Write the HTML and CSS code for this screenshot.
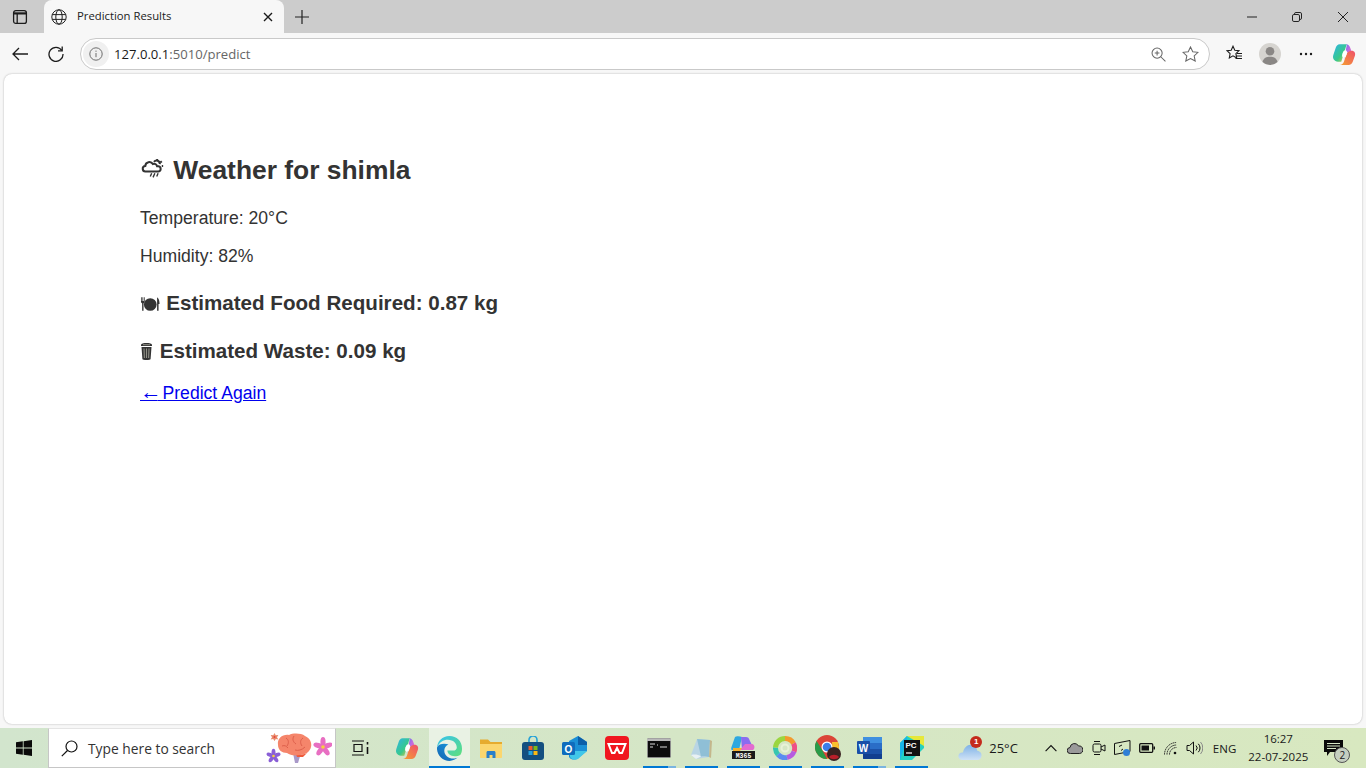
FILE: index.html
```html
<!DOCTYPE html>
<html lang="en">
<head>
    <meta charset="UTF-8">
    <title>Prediction Results</title>
    <link rel="stylesheet" href="styles.css">
</head>
<body>
<div class="window">
    <div class="tab-strip">
        <div class="strip-btn">
            <svg width="16" height="16" viewBox="0 0 16 16" fill="none" stroke="#1c1c1c" stroke-width="1.3"><rect x="1.6" y="1.6" width="12.8" height="12.8" rx="2.2"/><path d="M1.6 4.4h12.8" stroke-width="2.2"/><path d="M5.2 4.8v9.6"/></svg>
        </div>
        <div class="tab">
            <svg class="tab-globe" width="16" height="16" viewBox="0 0 16 16" fill="none" stroke="#222" stroke-width="1"><circle cx="8" cy="8" r="7.2"/><ellipse cx="8" cy="8" rx="3.2" ry="7.2"/><path d="M1.2 5.6h13.6M1.2 10.4h13.6"/></svg>
            <span class="tab-title">Prediction Results</span>
            <svg class="tab-close" width="10" height="10" viewBox="0 0 10 10" stroke="#1a1a1a" stroke-width="1.4"><path d="M1 1l8 8M9 1l-8 8"/></svg>
        </div>
        <div class="new-tab">
            <svg width="14" height="14" viewBox="0 0 14 14" stroke="#222" stroke-width="1.2"><path d="M7 0v14M0 7h14"/></svg>
        </div>
        <div class="window-controls">
            <div class="win-btn"><svg width="10" height="10" viewBox="0 0 10 10" stroke="#222" stroke-width="1"><path d="M0 5h10"/></svg></div>
            <div class="win-btn"><svg width="10" height="10" viewBox="0 0 10 10" fill="none" stroke="#222" stroke-width="1"><rect x=".5" y="2.5" width="7" height="7" rx="1.4"/><path d="M2.5 2.5v-.6a1.4 1.4 0 0 1 1.4-1.4h4.2a1.4 1.4 0 0 1 1.4 1.4v4.2a1.4 1.4 0 0 1-1.4 1.4h-.6"/></svg></div>
            <div class="win-btn"><svg width="10" height="10" viewBox="0 0 10 10" stroke="#222" stroke-width="1"><path d="M0 0l10 10M10 0l-10 10"/></svg></div>
        </div>
    </div>

    <div class="toolbar">
        <div class="nav-btn">
            <svg width="16" height="14" viewBox="0 0 16 14" fill="none" stroke="#1c1c1c" stroke-width="1.3"><path d="M16 7H1M7 1L1 7l6 6"/></svg>
        </div>
        <div class="nav-btn">
            <svg width="16" height="16" viewBox="0 0 16 16" fill="none" stroke="#1c1c1c" stroke-width="1.3"><path d="M13.8 4.4A7 7 0 1 0 15 8"/><path d="M14.2 .6v4.2h-4.2"/></svg>
        </div>
        <div class="address-bar">
            <div class="info-pill">
                <svg width="14" height="14" viewBox="0 0 14 14" fill="none" stroke="#6d6d6d" stroke-width="1"><circle cx="7" cy="7" r="6.2"/><path d="M7 6v4.2M7 3.6v1.2"/></svg>
            </div>
            <span class="url"><span class="url-host">127.0.0.1</span>:5010/predict</span>
            <div class="address-icons">
                <svg width="15" height="15" viewBox="0 0 16 16" fill="none" stroke="#666" stroke-width="1.1"><circle cx="6.5" cy="6.5" r="5.4"/><path d="M10.4 10.4l5 5M6.5 4v5M4 6.5h5"/></svg>
                <svg width="17" height="16" viewBox="0 0 18 17" fill="none" stroke="#666" stroke-width="1.1"><path d="M9 1l2.4 5 5.6.7-4.1 3.8 1.1 5.5L9 13.3 4 16l1.1-5.5L1 6.7 6.6 6z"/></svg>
            </div>
        </div>
        <div class="toolbar-icons">
            <div class="tool-btn"><svg width="17" height="17" viewBox="0 0 17 17" fill="none" stroke="#1c1c1c" stroke-width="1.1"><path d="M7 1.2l1.8 4 4.2.5-3.1 2.9.8 4.3L7 10.8l-3.7 2.1.8-4.3L1 5.7l4.2-.5z"/><path d="M11 8.5h5M10.5 11h5.500M9.500 13.500h6.500"/></svg></div>
            <div class="tool-btn"><div class="avatar"><svg width="22" height="22" viewBox="0 0 22 22"><circle cx="11" cy="11" r="11" fill="#d6d4d0"/><circle cx="11" cy="8.200" r="4.300" fill="#8a8785"/><path d="M3.500 19c1-4 4-5.200 7.500-5.200s6.500 1.200 7.500 5.200a11 11 0 0 1-15 0z" fill="#8a8785"/></svg></div></div>
            <div class="tool-btn"><svg width="14" height="4" viewBox="0 0 14 4" fill="#1c1c1c"><circle cx="2" cy="2" r="1.200"/><circle cx="7" cy="2" r="1.200"/><circle cx="12" cy="2" r="1.200"/></svg></div>
            <div class="tool-btn tool-copilot">
                <svg width="24" height="24" viewBox="0 0 22 22"><defs><linearGradient id="cpA" x1="0" y1="0" x2="1" y2="1"><stop offset="0" stop-color="#2fb4e8"/><stop offset=".6" stop-color="#38c98a"/><stop offset="1" stop-color="#f5c83a"/></linearGradient><linearGradient id="cpB" x1="0" y1="0" x2="1" y2="1"><stop offset="0" stop-color="#5a7bf0"/><stop offset=".5" stop-color="#c56be0"/><stop offset="1" stop-color="#f0609a"/></linearGradient><linearGradient id="cpC" x1="0" y1="1" x2="1" y2="0"><stop offset="0" stop-color="#f5a12e"/><stop offset="1" stop-color="#ef4f6c"/></linearGradient></defs><path d="M7 2h6.500l-3 9.500L8.500 18H5.500C2 18 .2 15 1.200 12L3.500 5C4.100 3.200 5.300 2 7 2z" fill="url(#cpA)"/><path d="M13 2c2 0 3 1.200 3.600 3L18 9h-1c-2.500 0-4 1-4.600 3L11 16 13.500 3z" fill="url(#cpB)"/><path d="M18 8c2.500 0 3.800 2 3 4.500l-2 5.500c-.6 1.700-1.900 3-3.800 3H7c2 0 3.300-1.300 3.900-3l1.700-5C13.300 10 15 8 18 8z" fill="url(#cpC)"/><ellipse cx="11.500" cy="11" rx="2" ry="3.500" fill="#fff" transform="rotate(18 11.500 11)"/></svg>
            </div>
        </div>
    </div>

    <main class="page">
        <h2 class="page-title">
            <svg class="emoji emoji-weather" width="25" height="21" viewBox="0 0 25 21" fill="none" stroke="#333" stroke-width="2.200"><g transform="translate(1 1) scale(.92)"><path d="M5 13.500H4a3 3 0 0 1-.4-6 4.400 4.400 0 0 1 8.200-2 3.400 3.400 0 0 1 4.600 2.500h1.600a2.800 2.800 0 0 1 0 5.500z"/><path d="M13 3a3.600 3.600 0 0 1 6.400 2.500M16.500 0v1.200M21.500 2.500l-1.200 1M23 7.500h-1.500"/><path d="M10.500 15.500l-1.500 3.500M14 15.500l-2 4.500M17.500 15.500l-1.500 3.500" stroke-width="1.500"/></g></svg>
            Weather for shimla
        </h2>
        <p>Temperature: 20°C</p>
        <p>Humidity: 82%</p>
        <h3 class="food-line">
            <svg class="emoji emoji-food" width="20.500" height="16" viewBox="0 0 21 16"><circle cx="10.500" cy="8.500" r="6.500" fill="#333"/><path d="M1 1v4.500c0 1 .6 1.600 1.200 2V15h1.400V7.500c.6-.4 1.200-1 1.200-2V1H4v4H3.300V1H2.500v4H1.800V1zM17.500 1c2 1.500 2.500 4 2.500 7h-1v7h-1.500z" fill="#333"/></svg>
            Estimated Food Required: 0.87 kg
        </h3>
        <h3>
            <svg class="emoji emoji-bin" width="14" height="17" viewBox="0 0 14 17"><path d="M1 1.500C1 .6 3.500 0 6.500 0S12 .6 12 1.500V3H1z" fill="#333"/><path d="M1.500 4h10L10.600 16c0 .6-2 1-4.100 1s-4.100-.4-4.100-1z" fill="#333"/><path d="M4 5.500l.4 9.500M6.500 5.500V15M9 5.500L8.600 15" stroke="#8f8f85" stroke-width="1.100"/><path d="M3 1.700h7" stroke="#8f8f85"/></svg>
            Estimated Waste: 0.09 kg
        </h3>
        <a class="back-link" href="#"><span class="back-arrow">←</span> Predict Again</a>
    </main>

    <footer class="taskbar">
        <div class="start-btn">
            <svg width="16" height="16" viewBox="0 0 16 16" fill="#0a0a0a"><path d="M0 2.300l6.800-1v6.300H0zM7.600 1.200L16 0v7.600H7.600zM0 8.400h6.800v6.300l-6.800-1zM7.600 8.400H16V16l-8.400-1.200z"/></svg>
        </div>
        <div class="search-box">
            <svg width="17" height="17" viewBox="0 0 17 17" fill="none" stroke="#111" stroke-width="1.200"><circle cx="10.500" cy="6.500" r="5.500"/><path d="M6.500 10.500L.8 16.200"/></svg>
            <span class="search-text">Type here to search</span>
            <svg class="search-art" width="66" height="36" viewBox="0 0 66 36">
                <path d="M27 23h8l-3 10h-3z" fill="#a999c9"/>
                <path d="M29 22c3 3 9 3 12 1l-4 4h-6z" fill="#ef5a3a"/>
                <path d="M12 15C11 8 17 4 23 5c4-2 12-2 16 1 5 2 7 7 6 11-1 5-6 8-12 8-5 1-9 0-12-2-5 0-9-3-9-8z" fill="#f5856b"/>
                <path d="M20 8c3 2 3 5 1 8M28 6c-2 3-1 6 2 8M37 8c-3 2-3 5-1 8M16 16c3-1 4 0 6 2M29 20c3 1 7 0 10-3" fill="none" stroke="#dd5f4b" stroke-width="1"/>
                <g transform="translate(1 0)">
                    <g fill="#e86fc2"><ellipse cx="56" cy="12" rx="2.600" ry="5"/><ellipse cx="56" cy="12" rx="2.600" ry="5" transform="rotate(72 56 17)"/><ellipse cx="56" cy="12" rx="2.600" ry="5" transform="rotate(144 56 17)"/><ellipse cx="56" cy="12" rx="2.600" ry="5" transform="rotate(216 56 17)"/><ellipse cx="56" cy="12" rx="2.600" ry="5" transform="rotate(288 56 17)"/></g><circle cx="56" cy="17" r="1.800" fill="#f5d33c"/>
                </g>
                <g transform="translate(1.500 0)">
                    <g fill="#8a5fd6"><ellipse cx="6" cy="22.500" rx="2" ry="3.800"/><ellipse cx="6" cy="22.500" rx="2" ry="3.800" transform="rotate(72 6 26)"/><ellipse cx="6" cy="22.500" rx="2" ry="3.800" transform="rotate(144 6 26)"/><ellipse cx="6" cy="22.500" rx="2" ry="3.800" transform="rotate(216 6 26)"/><ellipse cx="6" cy="22.500" rx="2" ry="3.800" transform="rotate(288 6 26)"/></g><circle cx="6" cy="26" r="1.300" fill="#f5d33c"/>
                    <path d="M7 3l1.200 2.300L10.800 5 9.500 7.200 10.800 9.500 8.300 9 7 11 5.700 9 3.200 9.500 4.500 7.200 3.200 5l2.600.3z" fill="#e98a6a"/><circle cx="7" cy="7" r="1" fill="#e0433f"/>
                </g>
            </svg>
        </div>
        <div class="task-icons">
            <div class="task-view">
                <svg width="18" height="16" viewBox="0 0 18 16" fill="none" stroke="#111" stroke-width="1.200"><path d="M0 1h12M0 15h12M2 4.500h8v7H2z"/><path d="M15.500 2v2.500M15.500 7v7" stroke-width="1.600"/></svg>
            </div>
            <div class="task-item">
                <svg width="24" height="24" viewBox="0 0 22 22"><path d="M7 2h6.500l-3 9.500L8.500 18H5.500C2 18 .2 15 1.200 12L3.500 5C4.100 3.200 5.300 2 7 2z" fill="url(#cpA)"/><path d="M13 2c2 0 3 1.200 3.600 3L18 9h-1c-2.500 0-4 1-4.600 3L11 16 13.500 3z" fill="url(#cpB)"/><path d="M18 8c2.500 0 3.800 2 3 4.500l-2 5.500c-.6 1.700-1.900 3-3.800 3H7c2 0 3.300-1.300 3.900-3l1.700-5C13.300 10 15 8 18 8z" fill="url(#cpC)"/><ellipse cx="11.500" cy="11" rx="2" ry="3.500" fill="#fff" transform="rotate(18 11.500 11)"/></svg>
            </div>
            <div class="task-item is-active">
                <svg width="25" height="25" viewBox="0 0 24 24"><defs><linearGradient id="edgeA" x1="0" y1="1" x2="1" y2="0"><stop offset="0" stop-color="#1463b0"/><stop offset="1" stop-color="#1b9de2"/></linearGradient><linearGradient id="edgeB" x1="0" y1="0" x2="1" y2="1"><stop offset="0" stop-color="#35c1f1"/><stop offset="1" stop-color="#5fe07a"/></linearGradient></defs><path d="M12 0C5 0 .5 5 0 11c2-5 6-7.500 10.500-7.500 5 0 8.500 3.500 8.500 7.500 0 2-1.500 3-3.500 3H10c0 3 3 5.500 7 5.500 2 0 4-.5 5.500-1.500C24 15.500 24 13.500 24 12 24 5 19 0 12 0z" fill="url(#edgeB)"/><path d="M0 11c-.5 7 5 13 12 13 3 0 6-1.500 8-3.500-1.500 1-3 1.200-4 1.200-5.500 0-9-3.500-9-7.500 0-2.500 1.500-5 4-6C8 7 1.500 7 0 11z" fill="url(#edgeA)"/></svg>
            </div>
            <div class="task-item">
                <svg width="24" height="24" viewBox="0 0 24 24"><path d="M1 3.500h8l2.500 2.500H23v3H1z" fill="#e6ab2e"/><path d="M1 8h22v13c0 .6-.4 1-1 1H2c-.6 0-1-.4-1-1z" fill="#fbd66e"/><path d="M7.500 22v-5.500c0-1 .7-1.500 1.500-1.500h6c.8 0 1.500.5 1.500 1.500V22h-3v-3h-3v3z" fill="#2a7fc9"/></svg>
            </div>
            <div class="task-item">
                <svg width="24" height="24" viewBox="0 0 24 24"><path d="M8 7V4a4 4 0 0 1 8 0v3" fill="none" stroke="#25a2d8" stroke-width="1.600"/><rect x="1" y="6" width="22" height="18" rx="3" fill="#144f80"/><path d="M7.500 10h4v4h-4z" fill="#ef5b2b"/><path d="M12.500 10h4v4h-4z" fill="#7db71a"/><path d="M7.500 15h4v4h-4z" fill="#23a3e0"/><path d="M12.500 15h4v4h-4z" fill="#fbb813"/></svg>
            </div>
            <div class="task-item">
                <svg width="25" height="24" viewBox="0 0 25 24"><path d="M7 5l9-5 9 6v9L15 23c-3 1-6 1-8-2z" fill="#1b8fd6"/><path d="M16 0l9 6v3h-9z" fill="#0c5ea8"/><path d="M8 15h17l-9 8c-3 1-6 1-8-2z" fill="#41c7e9"/><rect x="0" y="6" width="13" height="13" rx="1.500" fill="#0f6cbd"/><text class="outlook-o" x="6.500" y="16.500">O</text></svg>
            </div>
            <div class="task-item">
                <svg width="24" height="24" viewBox="0 0 24 24"><rect width="24" height="24" rx="4" fill="#f0161f"/><path d="M3.500 8h17l-3.500 9h-2.500L12 12l-2.500 5H7z" fill="none" stroke="#fff" stroke-width="2"/></svg>
            </div>
            <div class="task-item is-open is-multi">
                <svg width="24" height="20" viewBox="0 0 24 20"><rect x=".5" y=".5" width="23" height="19" rx="1" fill="#0c0c0c" stroke="#8b8b8b"/><path d="M0 .5h24V3H0z" fill="#b9b9b9"/><path d="M3 6h5M3 9h3M10 7h1M13 9h7" stroke="#d9d9d9" stroke-width="1.200"/></svg>
            </div>
            <div class="task-item is-open">
                <svg width="24" height="24" viewBox="0 0 24 24"><path d="M2 19L8 3l13 1-1 17-13 2z" fill="#b9d5e4"/><path d="M8 3l13 1-1 17c-2-.5-5-1-8-.5z" fill="#8fbfd6"/><path d="M2 19c4-1 7-.5 10 1.500L7 23z" fill="#e9f1f4"/><path d="M20 21l1-17 2 1-1 17z" fill="#c4b78c"/></svg>
            </div>
            <div class="task-item is-open">
                <svg width="26" height="24" viewBox="0 0 26 24"><path d="M5 1c1-1 5-1 7 0L9 14H2C1 14 1 12 1.500 11z" fill="#2fa8e0"/><path d="M11 1h5c2 0 3 1 3.500 3L22 9h-7l-3 5z" fill="#8a6cf0"/><path d="M15 8h6c3 0 4 2 3 5l-1 1H10z" fill="#e26bd0"/><path d="M3 12h9l-2 3H3z" fill="#f6b12e"/><rect x="2" y="15" width="23" height="8" fill="#1a1a1a"/><text class="m365" x="13.500" y="21.800">M365</text></svg>
            </div>
            <div class="task-item is-open">
                <svg width="24" height="24" viewBox="0 0 24 24" fill="none" stroke-width="5"><path d="M12 2.500a9.500 9.500 0 0 1 8.500 5" stroke="#f39a2e"/><path d="M20.500 7.500a9.500 9.500 0 0 1 .5 8" stroke="#ee4f86"/><path d="M21 15.500a9.500 9.500 0 0 1-7 6" stroke="#b65ce0"/><path d="M14 21.500a9.500 9.500 0 0 1-9-3" stroke="#5a8cf0"/><path d="M5 18.500a9.500 9.500 0 0 1-2.500-7" stroke="#35c6b0"/><path d="M2.500 11.500A9.500 9.500 0 0 1 12 2.500" stroke="#9bd63f"/><circle cx="12" cy="12" r="3.500" stroke="#e8f2d8" stroke-width="2"/></svg>
            </div>
            <div class="task-item is-open">
                <svg width="26" height="26" viewBox="0 0 26 26"><circle cx="12" cy="12" r="12" fill="#db4437"/><path d="M12 24a12 12 0 0 1-10.400-18L7 14.500l5 9.500z" fill="#2a9b48"/><path d="M24 12a12 12 0 0 1-12 12l5.500-9L17 7h6z" fill="#fbc02d"/><circle cx="12" cy="12" r="5.500" fill="#fff"/><circle cx="12" cy="12" r="4.300" fill="#3b7de9"/><circle cx="19" cy="19" r="7" fill="#3a2320"/><path d="M14 22c2-3 8-3 10 0-2 3-8 3-10 0z" fill="#b8202a"/></svg>
            </div>
            <div class="task-item is-open is-multi">
                <svg width="25" height="24" viewBox="0 0 25 24"><rect x="6" y="1" width="19" height="22" rx="1" fill="#2a6dc7"/><path d="M6 1h19v6H6z" fill="#3f8fe0"/><path d="M6 13h19v5H6z" fill="#1c52a8"/><path d="M6 18h19v4c0 .6-.4 1-1 1H7c-.6 0-1-.4-1-1z" fill="#123f8f"/><rect y="5" width="13" height="13" rx="1" fill="#1a4fa8"/><text class="word-w" x="6.500" y="15.500">W</text></svg>
            </div>
            <div class="task-item is-open">
                <svg width="24" height="24" viewBox="0 0 24 24"><path d="M7 0h17v12L12 24H0V7z" fill="#25d0c0"/><path d="M7 0h17v10z" fill="#e6e83a"/><path d="M0 7l7-7v4L0 24z" fill="#19b6e8"/><rect x="4" y="4" width="16" height="16" fill="#111"/><text class="pc-mark" x="5.500" y="12">PC</text><path d="M6 17h6" stroke="#fff" stroke-width="1.200"/></svg>
            </div>
        </div>
        <div class="weather">
            <div class="weather-icon">
                <svg width="24" height="24" viewBox="0 0 24 24"><defs><linearGradient id="cloudA" x1="0" y1="0" x2="0" y2="1"><stop offset="0" stop-color="#7fb2e6"/><stop offset="1" stop-color="#cfe2f6"/></linearGradient></defs><path d="M5 24c-3 0-5-2-4.500-4.500C1 17 3 16 5 16.500c1-5 5-8.500 9-7.500 3 .7 5 3 5.500 6 2.500 0 4.500 2.500 4 5-.3 2.500-2 4-4 4z" fill="url(#cloudA)"/></svg>
                <span class="weather-badge">1</span>
            </div>
            <span class="weather-temp">25°C</span>
        </div>
        <div class="tray">
            <div class="tray-item"><svg width="12" height="8" viewBox="0 0 12 8" fill="none" stroke="#111" stroke-width="1.100"><path d="M.6 7.200L6 1.500l5.400 5.700"/></svg></div>
            <div class="tray-item"><svg width="16" height="11" viewBox="0 0 16 11"><path d="M3.500 10.500a3 3 0 0 1-.5-6A4.500 4.500 0 0 1 11.500 3a3.800 3.800 0 0 1 1.200 7.500z" fill="#9a9a9a" stroke="#222"/></svg></div>
            <div class="tray-item"><svg width="14" height="16" viewBox="0 0 14 16" fill="none" stroke="#111"><rect x="1" y="4" width="8" height="8" rx="1.500"/><path d="M9 7l4-2v6l-4-2M2 1.500h6M2 14.500h6"/></svg></div>
            <div class="tray-item"><svg width="17" height="17" viewBox="0 0 17 17" fill="none" stroke="#111"><path d="M.5 3.500L16 .5v11l-15.500 3z"/><path d="M5 6.500l3-1.500M9 9l-2 1.500"/><circle cx="12.500" cy="12.500" r="3.500" fill="#2f7fd6" stroke="none"/></svg></div>
            <div class="tray-item"><svg width="16" height="10" viewBox="0 0 16 10"><rect x=".7" y=".7" width="13" height="8.600" rx="1" fill="none" stroke="#111" stroke-width="1.300"/><rect x="2.500" y="2.500" width="7.500" height="5" fill="#111"/><rect x="14.500" y="3.500" width="1.500" height="3" fill="#111"/></svg></div>
            <div class="tray-item"><svg width="14" height="13" viewBox="0 0 14 13" fill="none" stroke="#222"><path d="M.5 12.500a12 12 0 0 1 12-12M3 12.500a9.500 9.500 0 0 1 9.500-9.500M5.500 12.500a7 7 0 0 1 7-7" stroke-dasharray="1.500 .6"/><circle cx="11" cy="11" r="1.300" fill="#111" stroke="none"/></svg></div>
            <div class="tray-item"><svg width="17" height="14" viewBox="0 0 17 14" fill="none" stroke="#111"><path d="M1 4.500h2.500L7.500 1v12l-4-3.500H1z"/><path d="M10 4.500a3.500 3.500 0 0 1 0 5M12.300 2.800a6 6 0 0 1 0 8.400"/><path d="M14.500 1a9 9 0 0 1 0 12" stroke="#888"/></svg></div>
            <span class="tray-lang">ENG</span>
            <div class="clock"><span>16:27</span><span>22-07-2025</span></div>
            <div class="notify">
                <svg width="19" height="16" viewBox="0 0 19 16"><path d="M0 0h19v12H6l-3 4v-4H0z" fill="#0a0a0a"/><path d="M3 3.500h13M3 6h13M3 8.500h9" stroke="#d5e6c5"/></svg>
                <span class="notify-count">2</span>
            </div>
        </div>
    </footer>
</div>
</body>
</html>
```

FILE: styles.css
```css
* {
    box-sizing: border-box;
}
body {
    margin: 0;
    font-family: "Liberation Sans", Arial, sans-serif;
    background-color: #f7f7f7;
    overflow: hidden;
}
svg {
    display: block;
    flex: none;
}
.window {
    display: flex;
    flex-direction: column;
    height: 768px;
}

/* tab strip */
.tab-strip {
    display: flex;
    height: 33px;
    flex: none;
    background-color: #cccccc;
}
.strip-btn {
    width: 44px;
    display: flex;
    align-items: center;
    justify-content: center;
    padding-right: 4px;
}
.tab {
    width: 240px;
    display: flex;
    align-items: center;
    padding: 0 11px 0 7px;
    background-color: #f7f7f7;
    border-radius: 8px 8px 0 0;
}
.tab-title {
    flex: 1;
    margin-left: 10px;
    margin-top: -2px;
    font-family: "Open Sans", sans-serif;
    font-size: 11.3px;
    color: #222;
}
.new-tab {
    width: 36px;
    display: flex;
    align-items: center;
    justify-content: center;
}
.window-controls {
    display: flex;
    margin-left: auto;
}
.win-btn {
    width: 45.8px;
    display: flex;
    align-items: center;
    justify-content: center;
}

/* toolbar */
.toolbar {
    display: flex;
    align-items: center;
    height: 41px;
    flex: none;
    padding: 0 0 0 2px;
}
.nav-btn {
    width: 36px;
    display: flex;
    align-items: center;
    justify-content: center;
}
.address-bar {
    display: flex;
    align-items: center;
    width: 1130px;
    height: 32px;
    margin-left: 6px;
    margin-top: 1px;
    padding: 0 10px 0 2px;
    background-color: #fff;
    border: 1px solid #c9c9c9;
    border-radius: 16px;
}
.info-pill {
    width: 26px;
    height: 26px;
    display: flex;
    align-items: center;
    justify-content: center;
    background-color: #f0f0f0;
    border-radius: 50%;
}
.url {
    margin-left: 5px;
    font-family: "Open Sans", sans-serif;
    font-size: 13.1px;
    color: #666;
}
.url-host {
    color: #1a1a1a;
}
.address-icons {
    display: flex;
    align-items: center;
    gap: 16px;
    margin-left: auto;
}
.toolbar-icons {
    display: flex;
    align-items: center;
    margin-left: 6px;
}
.tool-btn {
    width: 36px;
    display: flex;
    align-items: center;
    justify-content: center;
}
.tool-copilot {
    margin-left: 2px;
}

/* page card */
.page {
    flex: 1;
    margin: 0 4px 4px;
    padding: 79px 136px 0;
    background-color: #fff;
    border-radius: 8px;
    box-shadow: 0 0 2px rgba(0, 0, 0, 0.3);
    color: #333;
    font-size: 17.6px;
}
.page-title {
    margin: 0 0 21px;
    font-size: 26.4px;
    line-height: 34px;
}
.page p {
    margin: 0 0 18px;
    line-height: 20px;
}
.page h3 {
    margin: 25px 0 20px;
    font-size: 20.6px;
    line-height: 23px;
}
.emoji {
    display: inline-block;
}
.emoji-weather {
    vertical-align: 0;
    margin-left: 1px;
}
.emoji-food {
    vertical-align: -2px;
}
.emoji-bin {
    vertical-align: -2px;
}
.back-link {
    color: #0000ee;
    line-height: 20px;
}
.back-arrow {
    font-size: 21.5px;
    line-height: 1;
    letter-spacing: -3.9px;
}

/* taskbar */
.taskbar {
    display: flex;
    align-items: stretch;
    height: 40px;
    flex: none;
    background: linear-gradient(90deg, #d2e5cd, #d5e6c6 50%, #d8e8c0);
}
.start-btn {
    width: 48px;
    display: flex;
    align-items: center;
    justify-content: center;
}
.search-box {
    width: 288px;
    display: flex;
    align-items: center;
    padding: 0 12px;
    background-color: #fff;
    border: 1px solid #c6c6c6;
    border-top-color: #e4e4e4;
}
.search-text {
    margin-left: 10px;
    font-family: "Open Sans", sans-serif;
    font-size: 13.8px;
    color: #333;
}
.search-art {
    margin-left: auto;
    margin-right: -9px;
}
.task-icons {
    display: flex;
}
.task-view {
    width: 49.5px;
    display: flex;
    align-items: center;
    justify-content: center;
}
.task-item {
    width: 33px;
    margin: 0 4.55px;
    display: flex;
    align-items: center;
    justify-content: center;
    border-bottom: 2px solid transparent;
    padding-top: 2px;
}
.is-active {
    width: 41px;
    margin: 0 -0.4px 0 1.5px;
    background-color: #e9f2e4;
    border-bottom-color: #0078d4;
}
.is-open {
    border-bottom-color: #0078d4;
}
.is-multi {
    border-image: linear-gradient(90deg, #0078d4 75%, #7ab4e0 75%) 1;
}
.outlook-o {
    font: bold 10px "Liberation Sans", sans-serif;
    fill: #fff;
    text-anchor: middle;
}
.m365 {
    font: bold 6.5px "Liberation Mono", monospace;
    fill: #fff;
    text-anchor: middle;
}
.word-w {
    font: bold 10px "Liberation Sans", sans-serif;
    fill: #fff;
    text-anchor: middle;
}
.pc-mark {
    font: bold 8px "Liberation Sans", sans-serif;
    fill: #fff;
}
.weather {
    display: flex;
    align-items: center;
    margin-left: 25.5px;
}
.weather-icon {
    position: relative;
    width: 24px;
    height: 24px;
}
.weather-badge {
    position: absolute;
    top: 0;
    right: 0;
    width: 12px;
    height: 12px;
    background-color: #c42b1c;
    border-radius: 50%;
    color: #fff;
    font: bold 8px/12px "Liberation Sans", sans-serif;
    text-align: center;
}
.weather-temp {
    margin-left: 7px;
    font-family: "Open Sans", sans-serif;
    font-size: 13px;
    color: #1a1a1a;
}
.tray {
    display: flex;
    align-items: center;
    margin-left: 21px;
    font-family: "Open Sans", sans-serif;
    font-size: 11.5px;
    color: #1a1a1a;
}
.tray-item {
    width: 24px;
    display: flex;
    align-items: center;
    justify-content: center;
}
.tray-lang {
    margin-left: 6px;
}
.clock {
    display: flex;
    flex-direction: column;
    align-items: center;
    gap: 4px;
    margin-left: 12px;
    line-height: 14px;
}
.notify {
    position: relative;
    margin-left: 16px;
}
.notify-count {
    position: absolute;
    right: -7px;
    bottom: -7px;
    width: 16px;
    height: 16px;
    background-color: #c5cfc0;
    border: 1px solid #555;
    border-radius: 50%;
    font-size: 10px;
    line-height: 14px;
    text-align: center;
}
```
